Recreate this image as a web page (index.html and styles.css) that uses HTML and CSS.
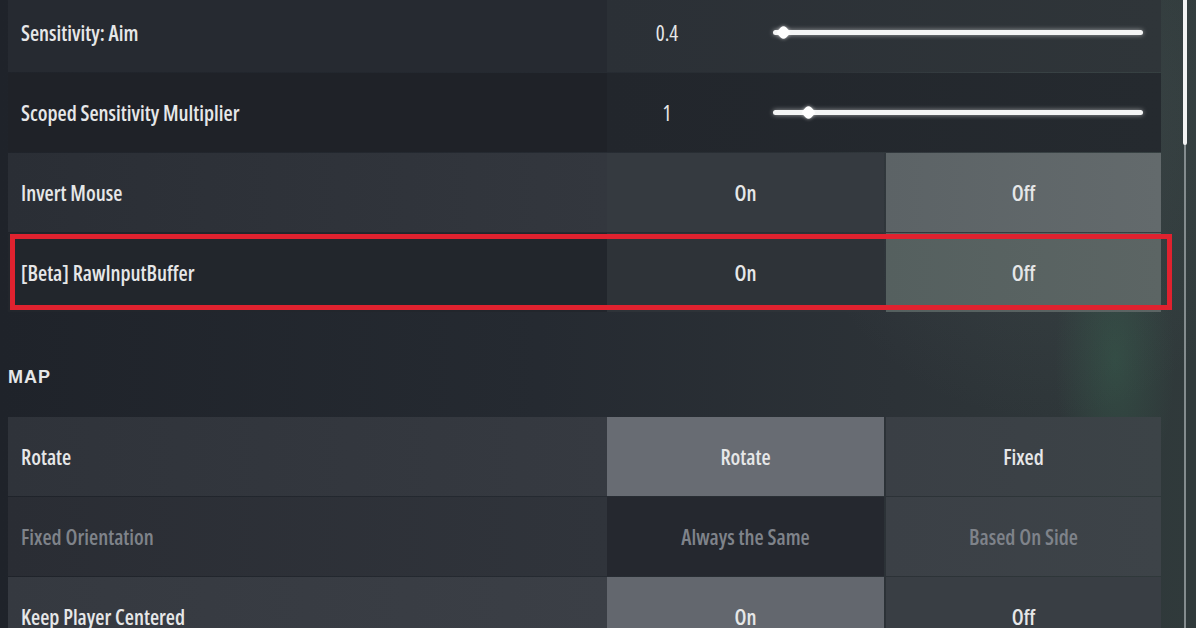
FILE: index.html
```html
<!DOCTYPE html>
<html lang="en">
  <head>
    <meta charset="UTF-8" />
    <title>Settings - Controls</title>
    <link rel="stylesheet" href="styles.css">
  </head>
  <body>
    <div class="settings">
      <div class="row row-a">
        <div class="label">Sensitivity: Aim</div>
        <div class="control slider">
          <span class="value">0.4</span>
          <div class="track"><span class="knob" style="left: 2.7%"></span></div>
        </div>
      </div>

      <div class="row row-b">
        <div class="label">Scoped Sensitivity Multiplier</div>
        <div class="control slider">
          <span class="value">1</span>
          <div class="track"><span class="knob" style="left: 9.5%"></span></div>
        </div>
      </div>

      <div class="row row-c">
        <div class="label">Invert Mouse</div>
        <div class="option">On</div>
        <div class="option selected">Off</div>
      </div>

      <div class="row row-d highlight">
        <div class="label">[Beta] RawInputBuffer</div>
        <div class="option">On</div>
        <div class="option selected">Off</div>
      </div>

      <div class="section-title">MAP</div>

      <div class="row row-e">
        <div class="label">Rotate</div>
        <div class="option selected">Rotate</div>
        <div class="option">Fixed</div>
      </div>

      <div class="row row-f disabled">
        <div class="label">Fixed Orientation</div>
        <div class="option selected">Always the Same</div>
        <div class="option">Based On Side</div>
      </div>

      <div class="row row-g">
        <div class="label">Keep Player Centered</div>
        <div class="option selected">On</div>
        <div class="option">Off</div>
      </div>
    </div>

    <div class="scrollbar">
      <div class="scroll-thumb"></div>
    </div>
  </body>
</html>
```

FILE: styles.css
```css
body {
  margin: 0;
  height: 628px;
  overflow: hidden;
  display: flex;
  align-items: flex-start;
  font-family: "Open Sans", "DejaVu Sans Condensed", sans-serif;
  font-stretch: 80%;
  color: #e6e7e8;
  background:
    radial-gradient(ellipse 60px 150px at 1115px 360px, rgba(60, 120, 90, 0.3), transparent),
    radial-gradient(ellipse 260px 300px at 1040px 120px, rgba(120, 135, 135, 0.16), transparent),
    linear-gradient(90deg, #1f232a 0%, #252a31 45%, #2c3237 75%, #303a3b 100%);
}

.settings {
  flex-shrink: 0;
  width: 1155px;
  margin-left: 8px;
  margin-top: -7px;
  display: flex;
  flex-direction: column;
  gap: 1px;
}

.row {
  position: relative;
  flex-shrink: 0;
  display: grid;
  grid-template-columns: 599px 277px 277px;
  height: 79px;
}

.label,
.option,
.value {
  font-size: 21px;
  font-weight: 600;
}

.label {
  display: flex;
  align-items: center;
  padding-left: 13px;
}

.option {
  display: flex;
  align-items: center;
  justify-content: center;
}

.option:last-child {
  margin-left: 2px;
}

/* slider rows */
.control {
  grid-column: 2 / 4;
  display: flex;
  align-items: center;
}

.value {
  width: 120px;
  text-align: center;
  font-weight: 500;
}

.track {
  position: relative;
  width: 370px;
  height: 5px;
  margin-left: 46px;
  border-radius: 3px;
  background: #f4f5f5;
  box-shadow: 0 0 5px rgba(255, 255, 255, 0.55);
}

.knob {
  position: absolute;
  top: -3px;
  width: 11px;
  height: 11px;
  margin-left: -5px;
  border-radius: 4px;
  background: #ffffff;
  transform: rotate(45deg);
  box-shadow: 0 0 4px rgba(255, 255, 255, 0.6);
}

/* per row backgrounds */
.row-a .label { background: #262a31; }
.row-a .control { background: linear-gradient(90deg, #2b3036, #2f3539); }

.row-b .label { background: #1f2228; }
.row-b .control { background: linear-gradient(90deg, #22262c, #252a2f); }

.row-c .label { background: linear-gradient(90deg, #2a2e35, #33373e); }
.row-c .option { background: #353a40; }
.row-c .option.selected { background: linear-gradient(90deg, #5c6366, #636a6c); }

.row-d .label { background: #22262c; }
.row-d .option { background: #2e3338; }
.row-d .option.selected { background: linear-gradient(90deg, #55605f, #5c6564); }

.row-e .label { background: linear-gradient(90deg, #2f333a, #363a41); }
.row-e .option { background: linear-gradient(90deg, #3a3f45, #3c4347); }
.row-e .option.selected { background: #686c73; }

.row-f .label { background: linear-gradient(90deg, #2a2d34, #30343b); }
.row-f .option { background: linear-gradient(90deg, #3b4046, #3d4348); }
.row-f .option.selected { background: #25282f; }

.row-g .label { background: linear-gradient(90deg, #353940, #3b3f46); }
.row-g .option { background: #393e44; }
.row-g .option.selected { background: #63676e; }

.disabled .label,
.disabled .option {
  color: #7f838a;
}

/* red box round the beta row */
.highlight::after {
  content: "";
  position: absolute;
  top: 1px;
  left: 2px;
  right: -9px;
  bottom: 2px;
  border: 5px solid #e0222f;
  pointer-events: none;
}

.section-title {
  flex-shrink: 0;
  height: 103px;
  padding-top: 52px;
  box-sizing: border-box;
  font-family: "Liberation Sans", sans-serif;
  font-stretch: normal;
  font-size: 18px;
  font-weight: bold;
  letter-spacing: 1px;
  line-height: 24px;
}

.scrollbar {
  position: relative;
  flex-shrink: 0;
  width: 4px;
  height: 628px;
  margin-left: 20px;
}

.scrollbar::before {
  content: "";
  position: absolute;
  left: 1px;
  top: 0;
  bottom: 0;
  width: 2px;
  background: #848c8e;
}

.scroll-thumb {
  position: relative;
  width: 4px;
  height: 145px;
  background: #f2f3f3;
  border-radius: 0 0 2px 2px;
}
```
